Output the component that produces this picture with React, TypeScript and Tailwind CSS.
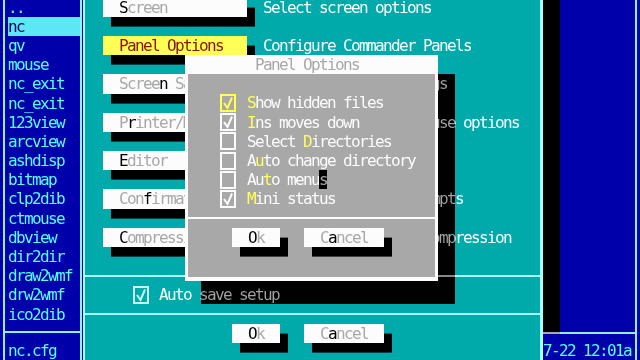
import React from 'react'

const files = ['..', 'nc', 'qv', 'mouse', 'nc_exit', 'nc_exit', '123view', 'arcview', 'ashdisp', 'bitmap', 'clp2dib', 'ctmouse', 'dbview', 'dir2dir', 'draw2wmf', 'drw2wmf', 'ico2dib']

const menu = [
  { label: 'Screen', hot: 0, desc: 'Select screen options' },
  { label: 'Panel Options', hot: -1, desc: 'Configure Commander Panels', selected: true },
  { label: 'Screen Saver', hot: 5, desc: 'Screen blanker settings' },
  { label: 'Printer/Mouse', hot: 1, desc: 'Set up printer and mouse options' },
  { label: 'Editor', hot: 0, desc: 'Choose text editor' },
  { label: 'Confirmation', hot: 3, desc: 'Configure warning prompts' },
  { label: 'Compression', hot: 0, desc: 'Select the level of compression' },
]

const options = [
  { label: 'Show hidden files', hot: 0, checked: true, focus: true },
  { label: 'Ins moves down', hot: 0, checked: true },
  { label: 'Select Directories', hot: 7, checked: false },
  { label: 'Auto change directory', hot: 1, checked: false },
  { label: 'Auto menus', hot: 2, checked: false, cursor: true },
  { label: 'Mini status', hot: 0, checked: true },
]

function Label({ text, hot, hotClass }: { text: string; hot: number; hotClass: string }) {
  if (hot < 0) return <>{text}</>
  return (
    <>
      {text.slice(0, hot)}
      <span className={hotClass}>{text[hot]}</span>
      {text.slice(hot + 1)}
    </>
  )
}

function CheckBox({ checked, color }: { checked: boolean; color: string }) {
  return (
    <svg width="16" height="18" viewBox="0 0 16 18" className="shrink-0">
      <rect x="1" y="1" width="14" height="16" fill="none" stroke={color} strokeWidth="2" />
      {checked && <polyline points="4,9 7.5,14 12,3.5" fill="none" stroke={color} strokeWidth="2" />}
    </svg>
  )
}

function DosButton({ text, hot, className }: { text: string; hot: number; className: string }) {
  return (
    <div className={`bg-[#fcfcfc] text-[#a8a8a8] pl-[16px] leading-[19.2px] shadow-[8px_9.6px_0_0_#000] ${className}`}>
      <Label text={text} hot={hot} hotClass="text-black" />
    </div>
  )
}

function Divider({ color }: { color: string }) {
  return (
    <div className="h-[19.2px] flex items-center">
      <div className={`h-[2px] w-full ${color}`} />
    </div>
  )
}

export default function App() {
  return (
    <div className="w-[640px] h-[360px] overflow-hidden relative flex bg-black font-['DejaVu_Sans_Mono',monospace] text-[16px] tracking-[-1.63px] whitespace-pre">
      {/* left file panel */}
      <div className="w-[83px] shrink-0 bg-[#0000aa] pl-[3px] pr-[1px] flex">
        <div className="flex-1 border-x-2 border-[#8ff0ff] flex flex-col">
          <div className="-mt-[2.4px] flex flex-col">
            {files.map((f, i) => (
              <div
                key={i}
                className={`h-[19.2px] leading-[19.2px] ml-[3px] ${i === 1 ? 'bg-[#5de6f6] text-[#00005a]' : 'text-[#55ffff]'}`}
              >
                {f}
              </div>
            ))}
          </div>
          <Divider color="bg-[#8ff0ff]" />
          <div className="h-[19.2px] leading-[19.2px] ml-[3px] text-[#55ffff]">nc.cfg</div>
        </div>
      </div>

      {/* configuration dialog */}
      <div className="w-[460px] shrink-0 bg-[#00aaaa] border-l-2 border-r-[3px] border-[#aaffff]">
        <div className="-mt-[2.4px] flex flex-col">
          {menu.map((m) => (
            <React.Fragment key={m.label}>
              <div className="h-[19.2px] flex">
                <div
                  className={`ml-[18px] w-[144px] shrink-0 pl-[16px] leading-[19.2px] shadow-[8px_9.6px_0_0_#000] ${m.selected ? 'bg-[#ffff55] text-[#8b1500]' : 'bg-[#fcfcfc] text-[#a8a8a8]'}`}
                >
                  <Label text={m.label} hot={m.hot} hotClass="text-black" />
                </div>
                <div className="ml-[16px] leading-[19.2px] text-[#fcfcfc]">{m.desc}</div>
              </div>
              <div className="h-[19.2px]" />
            </React.Fragment>
          ))}
          <Divider color="bg-[#aaffff]" />
          <div className="h-[19.2px] flex items-center">
            <div className="ml-[48px]">
              <CheckBox checked color="#ccffff" />
            </div>
            <span className="ml-[10px] leading-[19.2px] text-[#fcfcfc]">Auto save setup</span>
          </div>
          <Divider color="bg-[#aaffff]" />
          <div className="h-[19.2px] flex">
            <DosButton text="Ok" hot={0} className="ml-[147px] w-[48px]" />
            <DosButton text="Cancel" hot={1} className="ml-[24px] w-[80px]" />
          </div>
          <div className="h-[19.2px]" />
        </div>
      </div>

      {/* right panel, partly under the dialog shadow */}
      <div className="w-[97px] shrink-0 bg-[#0000aa] pr-[3px] flex">
        <div className="flex-1 border-r-2 border-[#8ff0ff] flex flex-col">
          <div className="h-[332px] flex">
            <div className="w-[17px] bg-black" />
          </div>
          <div className="h-[2px] flex">
            <div className="w-[17px] bg-[#a8a8a8]" />
            <div className="flex-1 bg-[#8ff0ff]" />
          </div>
          <div className="pt-[7px] h-[19.2px] leading-[19.2px] text-[#55ffff]">7-22 12:01a</div>
        </div>
      </div>

      {/* Panel Options dialog */}
      <div className="absolute left-[201px] top-[74.2px] w-[254px] h-[230px] [backdrop-filter:brightness(0.547)_contrast(3.656)_grayscale(1)]" />
      <div className="absolute left-[185px] top-[55px] w-[253px] h-[226px] bg-[#fcfcfc] flex flex-col">
        <div className="h-[19.2px] leading-[19.2px] pl-[70px] text-[#a8a8a8]">Panel Options</div>
        <div className="mx-[3px] mb-[4px] flex-1 bg-[#a8a8a8] flex flex-col">
          <div className="h-[19.2px]" />
          {options.map((o) => (
            <div key={o.label} className="h-[19.2px] flex items-center">
              <div className="ml-[32px]">
                <CheckBox checked={o.checked} color={o.focus ? '#ffff55' : '#fcfcfc'} />
              </div>
              <span className="ml-[11px] leading-[19.2px] text-[#fcfcfc]">
                {o.cursor ? (
                  <>
                    <Label text={o.label.slice(0, -1)} hot={o.hot} hotClass="text-[#ffff55]" />
                    <span className="bg-black text-[#a8a8a8]">{o.label.slice(-1)}</span>
                  </>
                ) : (
                  <Label text={o.label} hot={o.hot} hotClass="text-[#ffff55]" />
                )}
              </span>
            </div>
          ))}
          <Divider color="bg-[#fcfcfc]" />
          <div className="h-[19.2px] flex">
            <DosButton text="Ok" hot={0} className="ml-[44px] w-[48px]" />
            <DosButton text="Cancel" hot={1} className="ml-[24px] w-[80px]" />
          </div>
        </div>
      </div>
    </div>
  )
}
